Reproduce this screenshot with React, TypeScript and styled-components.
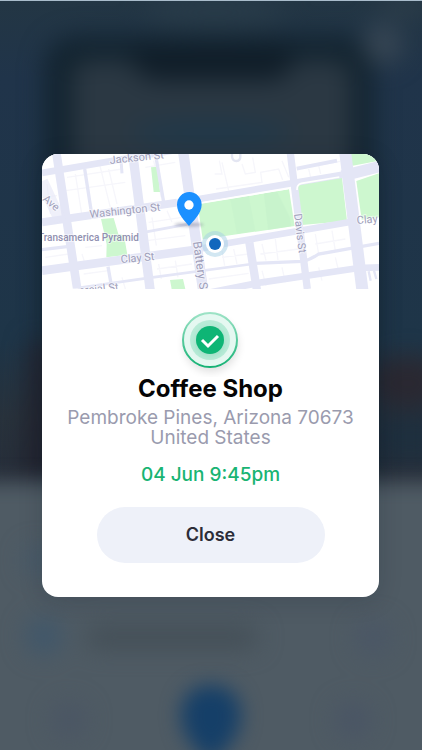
import React from "react";
import styled, { createGlobalStyle } from "styled-components";

const GlobalStyle = createGlobalStyle`
  *, *::before, *::after { box-sizing: border-box; }
  body {
    margin: 0;
    font-family: Inter, "Liberation Sans", sans-serif;
    -webkit-font-smoothing: antialiased;
  }
`;

const Screen = styled.div`
  position: relative;
  min-height: 100vh;
  display: flex;
  overflow: hidden;
  background: #1f3346;
  border-top: 1px solid #a9bccb;
`;

const Backdrop = styled.div`
  position: absolute;
  inset: 0;
  overflow: hidden;
`;

const BackdropArt = styled.svg`
  display: block;
  width: 100%;
  height: 100%;
`;

const Overlay = styled.main`
  position: relative;
  flex: 1;
  display: flex;
  align-items: center;
  justify-content: center;
  padding: 24px 43px 24px 42px;
`;

const Card = styled.section`
  width: 100%;
  max-width: 420px;
  display: flex;
  flex-direction: column;
  overflow: hidden;
  border-radius: 16px;
  background: #fff;
  box-shadow: 0 4px 24px rgba(10, 20, 35, 0.16);
`;

const MapArt = styled.svg`
  display: block;
  width: 100%;
  height: 135px;
`;

const MapLabel = styled.text<{ $size?: number; $strong?: boolean }>`
  font-family: Roboto, "Liberation Sans", sans-serif;
  font-size: ${(p) => p.$size ?? 11}px;
  font-weight: ${(p) => (p.$strong ? 500 : 400)};
  fill: ${(p) => (p.$strong ? "#9090b0" : "#a0a0bb")};
  stroke: #fff;
  stroke-width: 2px;
  stroke-opacity: 0.5;
  paint-order: stroke;
`;

const Details = styled.div`
  display: flex;
  flex-direction: column;
  align-items: center;
  padding: 16px 16px 34px;
  text-align: center;
`;

const CheckArt = styled.svg`
  width: 72px;
  height: 72px;
`;

const Title = styled.h1`
  margin: 0;
  font-size: 24px;
  line-height: 24px;
  font-weight: 700;
  color: #050506;
`;

const Address = styled.address`
  margin-top: 7px;
  font-style: normal;
  font-size: 19px;
  line-height: 20px;
  color: #9a9bae;
`;

const Time = styled.time`
  margin-top: 17px;
  font-size: 19px;
  line-height: 20px;
  font-weight: 500;
  color: #19b473;
`;

const CloseButton = styled.button`
  width: 228px;
  max-width: 100%;
  height: 56px;
  margin-top: 22px;
  border: 0;
  border-radius: 28px;
  background: #eef1f9;
  color: #2c2d38;
  font-family: inherit;
  font-size: 18px;
  line-height: 24px;
  font-weight: 600;
  cursor: pointer;
`;

function BlurredHome() {
  return (
    <BackdropArt viewBox="0 0 422 750" preserveAspectRatio="none" aria-hidden="true">
      <defs>
        <filter id="soft" x="-100%" y="-100%" width="300%" height="300%" colorInterpolationFilters="sRGB">
          <feGaussianBlur stdDeviation="12" />
        </filter>
        <filter id="softSmall" x="-100%" y="-100%" width="300%" height="300%" colorInterpolationFilters="sRGB">
          <feGaussianBlur stdDeviation="10" />
        </filter>
        <linearGradient id="hero" x1="0" y1="0" x2="0" y2="1">
          <stop offset="0" stopColor="#233644" />
          <stop offset="0.15" stopColor="#20344a" />
          <stop offset="0.65" stopColor="#1e3548" />
          <stop offset="0.8" stopColor="#28323c" />
          <stop offset="1" stopColor="#252b38" />
        </linearGradient>
      </defs>
      <rect width="422" height="520" fill="url(#hero)" />
      <g filter="url(#soft)">
        <ellipse cx="215" cy="10" rx="70" ry="18" fill="#283b49" />
        <path d="M44 330V70Q44 34 84 34H338Q374 34 374 70V500H44Z" fill="#132430" />
        <path d="M73 330V78Q73 60 92 60H130Q140 80 160 80H270Q286 80 295 60H330Q351 60 351 84V330Z" fill="#2b3843" />
        <path d="M130 48H294Q290 78 266 78H162Q138 78 130 48Z" fill="#101d28" />
        <ellipse cx="211" cy="132" rx="80" ry="12" fill="#1f384a" />
        <circle cx="383" cy="43" r="20" fill="#374654" />
        <ellipse cx="405" cy="5" rx="26" ry="8" fill="#30404c" />
        <path d="M30 340H60V480H24Z" fill="#21232e" />
        <ellipse cx="408" cy="382" rx="38" ry="26" fill="#2a2831" />
        <rect x="380" y="412" width="60" height="50" fill="#1e2f3e" />
      </g>
      <rect x="-60" y="481" width="542" height="330" fill="#4f5b64" filter="url(#softSmall)" />
      <g filter="url(#soft)">
        <circle cx="38" cy="560" r="13" fill="#455a6b" />
        <circle cx="44" cy="636" r="18" fill="#3f576b" />
        <rect x="86" y="626" width="172" height="22" rx="11" fill="#434e56" />
        <circle cx="373" cy="638" r="17" fill="#4a5666" />
        <circle cx="69" cy="720" r="17" fill="#4a5564" />
        <circle cx="353" cy="720" r="17" fill="#495465" />
      </g>
      <path d="M211 685C231 685 241 698 241 716C241 736 224 752 211 764C198 752 181 736 181 716C181 698 191 685 211 685Z" fill="#153f68" filter="url(#softSmall)" />
    </BackdropArt>
  );
}

function LocationMap() {
  return (
    <MapArt viewBox="0 0 337 135" preserveAspectRatio="xMidYMid slice" role="img" aria-label="Map of the coffee shop">
      <defs>
        <filter id="pinShade" x="-50%" y="-200%" width="200%" height="500%">
          <feGaussianBlur stdDeviation="4" />
        </filter>
      </defs>
      <rect width="337" height="135" fill="#fff" />
      <g transform="scale(0.33333)">
        <g fill="none" stroke="#f6f6fb" strokeWidth="4">
          <path d="M75 70L240 45M70 110L250 85M100 60L120 185M170 20L205 160M200 45L225 150M0 130L45 125M15 90L25 180M310 40L400 25M335 20L358 130M320 205L420 190M330 190L343 275M375 170L390 205M315 260L430 245" />
          <path d="M518 60L540 60L532 20M522 105L660 85L656 55L710 45L722 78M540 25L560 110M600 30L610 60L640 55L632 10M720 20L740 70M765 45L895 22M800 45L806 70M830 35L836 60" />
          <path d="M540 290L548 335M575 285L585 330M540 310L620 300M660 270L672 320M700 255L708 318M655 300L770 285M820 240L830 300M870 230L880 290M820 270L910 255M660 350L672 395M720 340L730 385M830 340L840 380M880 310L892 360M500 375L620 358M240 370L250 405M125 360L200 350M345 345L450 330M350 330L358 375M400 320L408 370M10 310L80 300M130 280L180 275M120 300L128 325" />
        </g>
        <path d="M570 -5V8Q572 22 584 21Q596 20 595 5V-5" fill="none" stroke="#e4e6f2" strokeWidth="7" />
        <g fill="#cdf7cf">
          <path d="M327 40L346 38L354 114L335 114Z" />
          <path d="M177 195L215 192L229 240L246 244L256 302L193 310L194 270Z" />
          <path d="M384 378L423 375L430 405H389Z" />
          <path d="M467 150L741 106L758 216L482 256Z" />
          <path d="M765 101Q765 94 774 91L900 71L915 201L780 213Z" />
          <path d="M920 0H1011V20L924 37Z" />
          <path d="M943 81L1011 58V190L959 197Z" />
        </g>
        <g fill="#c5f1cb" opacity="0.5">
          <path d="M565 135L620 126L640 230L585 239Z" />
          <path d="M665 118L705 112L744 190L748 217L678 228Z" />
        </g>
        <g fill="none" stroke="#e4e6f6">
          <path d="M0 57L420 -15" strokeWidth="20" />
          <path d="M0 205L405 146" strokeWidth="24" />
          <path d="M405 146L900 62" strokeWidth="20" />
          <path d="M900 66L1011 38" strokeWidth="34" />
          <path d="M0 350L455 288" strokeWidth="26" />
          <path d="M455 288L560 267L920 205" strokeWidth="20" />
          <path d="M0 287L75 278" strokeWidth="10" />
          <path d="M305 235L450 208" strokeWidth="8" />
          <path d="M100 403L310 373L630 330" strokeWidth="8" />
          <path d="M640 328L780 322Q805 318 830 300L1011 268" strokeWidth="10" />
          <path d="M480 420L660 385L950 342L1011 340" strokeWidth="20" />
          <path d="M42 -10L108 420" strokeWidth="26" />
          <path d="M128 45L149 180M198 338L210 405" strokeWidth="10" />
          <path d="M271 -10L326 420" strokeWidth="28" />
          <path d="M237 20L240 58" strokeWidth="9" />
          <path d="M342 10L365 145" strokeWidth="10" />
          <path d="M423 -10L485 420" strokeWidth="31" />
          <path d="M622 265L645 410" strokeWidth="25" />
          <path d="M744 -10L796 405" strokeWidth="22" />
          <path d="M909 -10L962 415" strokeWidth="36" />
          <path d="M764 44L885 20" strokeWidth="11" />
          <path d="M0 82L55 200" strokeWidth="36" opacity="0.6" />
          <path d="M980 352L986 380M996 350L1003 375" strokeWidth="7" />
        </g>
        <path d="M765 108Q764 92 778 88L892 69" fill="none" stroke="#fff" strokeWidth="5" />
        <path d="M478 147L738 104" fill="none" stroke="#fff" strokeWidth="4" />
        <ellipse cx="441" cy="212" rx="44" ry="6" fill="#777b91" opacity="0.45" filter="url(#pinShade)" />
        <path d="M441 216C430 202 405 179 405 152A37 38 0 0 1 479 152C479 179 452 202 441 216Z" fill="#1b90ff" />
        <circle cx="441" cy="153" r="14" fill="#fff" />
      </g>
      <MapLabel transform="translate(68 10) rotate(-6)">Jackson St</MapLabel>
      <MapLabel transform="translate(48 64) rotate(-6)">Washington St</MapLabel>
      <MapLabel transform="translate(0 46) rotate(40)">Ave</MapLabel>
      <MapLabel $strong $size={10} x="-4" y="87">Transamerica Pyramid</MapLabel>
      <MapLabel transform="translate(79 109) rotate(-5)">Clay St</MapLabel>
      <MapLabel transform="translate(5 144) rotate(-6)">Commercial St</MapLabel>
      <MapLabel $size={12} transform="translate(151 88) rotate(82)">Battery St</MapLabel>
      <MapLabel transform="translate(252 60) rotate(83)">Davis St</MapLabel>
      <MapLabel transform="translate(315 70) rotate(-5)">Clay St</MapLabel>
      <circle cx="173" cy="90" r="13" fill="#a5cfe6" opacity="0.5" />
      <circle cx="173" cy="90" r="9" fill="#fff" />
      <circle cx="173" cy="90" r="6" fill="#1167bd" />
    </MapArt>
  );
}

function CheckBadge() {
  return (
    <CheckArt viewBox="0 0 72 72" aria-hidden="true">
      <defs>
        <linearGradient id="ring" x1="0" y1="0" x2="0" y2="1">
          <stop offset="0" stopColor="#9de3c6" />
          <stop offset="1" stopColor="#14b274" />
        </linearGradient>
        <filter id="badgeShade" x="-30%" y="-30%" width="160%" height="160%">
          <feGaussianBlur stdDeviation="4" />
        </filter>
      </defs>
      <circle cx="36" cy="40" r="27" fill="#000" opacity="0.12" filter="url(#badgeShade)" />
      <circle cx="35" cy="35" r="27" fill="#e5f8f1" stroke="url(#ring)" strokeWidth="2" />
      <circle cx="35" cy="35" r="20" fill="#b9ecd8" />
      <circle cx="35" cy="37" r="13" fill="#087c50" opacity="0.2" filter="url(#badgeShade)" />
      <circle cx="35" cy="35" r="14" fill="#0eb575" />
      <path d="M27 35L33 41L43 31" fill="none" stroke="#fff" strokeWidth="3" />
    </CheckArt>
  );
}

export default function App() {
  return (
    <>
      <GlobalStyle />
      <Screen>
        <Backdrop>
          <BlurredHome />
        </Backdrop>
        <Overlay>
          <Card role="dialog" aria-modal="true" aria-labelledby="place-name">
            <LocationMap />
            <Details>
              <CheckBadge />
              <Title id="place-name">Coffee Shop</Title>
              <Address>
                Pembroke Pines, Arizona 70673
                <br />
                United States
              </Address>
              <Time>04 Jun 9:45pm</Time>
              <CloseButton type="button">Close</CloseButton>
            </Details>
          </Card>
        </Overlay>
      </Screen>
    </>
  );
}
